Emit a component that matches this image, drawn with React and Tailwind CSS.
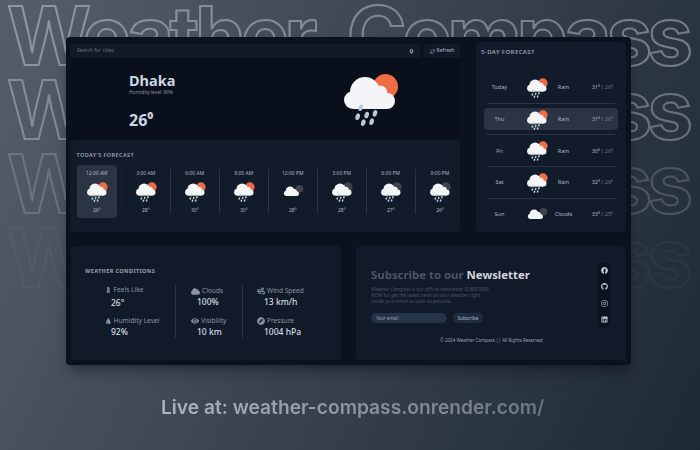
import { FaCloud, FaCompass, FaEye, FaFacebook, FaGithub, FaInstagram, FaLinkedin, FaMapMarkerAlt, FaThermometerFull, FaTint, FaWind } from 'react-icons/fa';
import { LuRefreshCw } from 'react-icons/lu';

const hours = [
  { time: '12:00 AM', temp: '26', kind: 'rain' },
  { time: '3:00 AM', temp: '28', kind: 'rain' },
  { time: '6:00 AM', temp: '30', kind: 'rain' },
  { time: '9:00 AM', temp: '30', kind: 'rain' },
  { time: '12:00 PM', temp: '28', kind: 'clouds' },
  { time: '3:00 PM', temp: '28', kind: 'night' },
  { time: '6:00 PM', temp: '27', kind: 'night' },
  { time: '9:00 PM', temp: '26', kind: 'night' },
];

const days = [
  { day: 'Today', kind: 'rain', label: 'Rain', high: '31⁰', low: '26⁰' },
  { day: 'Thu', kind: 'rain', label: 'Rain', high: '31⁰', low: '26⁰', active: true },
  { day: 'Fri', kind: 'rain', label: 'Rain', high: '30⁰', low: '26⁰' },
  { day: 'Sat', kind: 'rain', label: 'Rain', high: '32⁰', low: '26⁰' },
  { day: 'Sun', kind: 'clouds', label: 'Clouds', high: '33⁰', low: '25⁰' },
];

const drops = [
  [40.7, 47.7],
  [37.7, 56.7],
  [46.7, 55],
  [55, 53.3],
  [43.3, 62.7],
  [51.7, 61.7],
];

// Cloud with sun or moon behind it, drawn on a 100x75 box
const WeatherIcon = ({ kind, className }) => {
  const isRain = kind !== 'clouds';
  const orbColor = kind === 'rain' ? '#ee6c45' : '#3f444c';
  return (
    <svg viewBox="0 0 100 75" className={className}>
      {isRain ? <circle cx="65.5" cy="26.5" r="12.5" fill={orbColor} /> : <circle cx="67" cy="31" r="10" fill={orbColor} />}
      <g fill="#f3f5f7" transform={isRain ? undefined : 'translate(7.3 11.8) scale(0.78)'}>
        <circle cx="45" cy="32" r="15" />
        <circle cx="33" cy="40" r="9" />
        <circle cx="60" cy="33" r="7.5" />
        <circle cx="67" cy="41" r="8" />
        <rect x="33" y="36" width="34" height="13" />
      </g>
      {isRain &&
        drops.map(([x, y]) => (
          <ellipse key={`${x}-${y}`} cx={x} cy={y} rx="2.2" ry="3.4" fill="#b9c9da" transform={`rotate(15 ${x} ${y})`} />
        ))}
    </svg>
  );
};

const Condition = ({ icon, label, value, indent }) => (
  <div className="flex flex-col">
    <div className="flex h-[10px] items-center gap-[2px] whitespace-nowrap text-[6.6px] text-[#8a94a3]">
      {icon}
      <span>{label}</span>
    </div>
    <p className={`${indent} text-[8.5px] leading-[12px] font-medium text-[#d5dbe3]`}>{value}</p>
  </div>
);

const App = () => {
  return (
    <div className="relative h-[450px] w-[700px] overflow-hidden bg-[linear-gradient(115deg,#555e6b,#1e2936)] font-['Noto_Sans',sans-serif]">
      {/* Outlined title repeated behind the panel */}
      <div className="absolute top-[-1px] left-[7px] flex flex-col whitespace-nowrap font-['Inter',sans-serif] text-[81px] leading-[74px] font-bold tracking-[-4.5px] text-transparent [word-spacing:19px] [-webkit-text-stroke:2px_#ffffff]">
        <p className="opacity-35">Weather Compass</p>
        <p className="opacity-30">Weather Compass</p>
        <p className="opacity-[0.17]">Weather Compass</p>
        <p className="opacity-[0.03]">Weather Compass</p>
      </div>

      <div className="relative ml-[66px] mt-[37px] flex h-[328px] w-[565px] flex-col rounded-[4px] bg-[#0a121e] shadow-lg shadow-black/30">
        <div className="flex gap-[16px] pl-[4px] pt-[5px]">
          <div className="flex w-[390px] flex-col pt-[2px]">
            {/* Search */}
            <div className="flex h-[14px] gap-[4px]">
              <div className="flex flex-1 items-center justify-between rounded-[2px] bg-[#101a27] pl-[7px] pr-[6px] text-[5px] text-[#667080]">
                <span>Search for cities</span>
                <FaMapMarkerAlt className="text-[5px] text-[#8a94a3]" />
              </div>
              <div className="flex w-[36px] items-center justify-center gap-[2px] rounded-[2px] bg-[#101a27] text-[5px] text-[#aeb6c2]">
                <LuRefreshCw className="text-[5px]" />
                <span>Refresh</span>
              </div>
            </div>

            {/* Current weather */}
            <div className="flex h-[82px] justify-between bg-[#090f1b] pl-[59px] pr-[40px]">
              <div className="flex flex-col">
                <h1 className="mt-[12px] text-[14.5px] leading-[20px] font-bold text-[#cbd5e1]">Dhaka</h1>
                <p className="-mt-[1px] text-[4.8px] leading-[6px] text-[#8a94a3]">Humidity level: 90%</p>
                <p className="mt-[13px] text-[16px] leading-[24px] font-bold text-[#cbd5e1]">26⁰</p>
              </div>
              <WeatherIcon kind="rain" className="mt-[2px] h-[75px] w-[100px]" />
            </div>

            {/* Hourly forecast */}
            <div className="h-[92px] overflow-hidden rounded-[4px] bg-[#111b29] pl-[2.5px]">
              <h2 className="pl-[4px] pt-[11px] text-[5.5px] leading-[8px] font-semibold tracking-[0.4px] text-[#9ca3af]">TODAY'S FORECAST</h2>
              <div className="mt-[6px] flex">
                {hours.map((hour, i) => (
                  <div key={hour.time} className="flex h-[53px] w-[49px] shrink-0 items-center justify-center">
                    <div className={`flex h-[53px] w-[40px] flex-col items-center rounded-[4px] pt-[5px] ${i === 0 ? 'bg-[#2a3442]' : ''}`}>
                      <span className="text-[5px] leading-[7px] text-[#aeb6c2]">{hour.time}</span>
                      <WeatherIcon kind={hour.kind} className="h-[28.5px] w-[38px]" />
                      <span className="mt-[1px] text-[5px] leading-[7px] text-[#aeb6c2]">{hour.temp}⁰</span>
                    </div>
                    {i < 7 && <div className={`-mr-[4.5px] ml-[4px] h-[45px] w-px shrink-0 ${i === 0 ? 'bg-[#18222f]' : 'bg-[#2a3542]'}`} />}
                  </div>
                ))}
              </div>
            </div>
          </div>

          {/* 5-day forecast */}
          <div className="h-[190px] w-[150px] rounded-[4px] bg-[#111b29] px-[11px]">
            <h2 className="-ml-[6px] pt-[6px] text-[6px] leading-[8px] font-semibold tracking-[0.4px] text-[#9ca3af]">5-DAY FORECAST</h2>
            <div className="mt-[16px] flex flex-col">
              {days.map((row, i) => (
                <div key={row.day} className={`flex h-[31.7px] items-center ${i === 4 ? '' : 'border-b border-[#2a3542]'}`}>
                  <div className={`flex h-[22px] flex-1 items-center rounded-[4px] text-[5.5px] text-[#aeb6c2] ${row.active ? '-mx-[3px] bg-[#2a3442] px-[3px]' : ''}`}>
                    <span className="w-[25px] text-center">{row.day}</span>
                    <WeatherIcon kind={row.kind} className="-mr-[3px] ml-[5.5px] h-[28.5px] w-[38px]" />
                    <span className="w-[22px] text-center">{row.label}</span>
                    <span className="flex-1 pr-[2px] text-right text-[#6f7987]">
                      <span className="text-[#aeb6c2]">{row.high}</span> / {row.low}
                    </span>
                  </div>
                </div>
              ))}
            </div>
          </div>
        </div>

        <div className="mt-[14px] flex gap-[15px] pl-[5px]">
          {/* Conditions */}
          <div className="h-[114px] w-[270px] rounded-[4px] bg-[#111a28] pl-[14px]">
            <h2 className="pt-[21px] text-[5.5px] leading-[8px] font-bold tracking-[0.4px] text-[#9ca3af]">WEATHER CONDITIONS</h2>
            <div className="mt-[10px] flex h-[53px]">
              <div className="flex w-[91px] flex-col justify-between border-r border-[#2a3542] pl-[20px]">
                <Condition icon={<FaThermometerFull />} label="Feels Like" value="26°" indent="ml-[6px] mt-[2px]" />
                <Condition icon={<FaTint />} label="Humidity Level" value="92%" indent="ml-[6px]" />
              </div>
              <div className="flex w-[67px] flex-col justify-between border-r border-[#2a3542] pl-[15px] pt-px">
                <Condition icon={<FaCloud className="text-[9px]" />} label="Clouds" value="100%" indent="ml-[6px]" />
                <Condition icon={<FaEye className="text-[8px]" />} label="Visibility" value="10 km" indent="ml-[6px]" />
              </div>
              <div className="flex flex-col justify-between pl-[14px] pt-px">
                <Condition icon={<FaWind className="text-[8px]" />} label="Wind Speed" value="13 km/h" indent="ml-[7px]" />
                <Condition icon={<FaCompass className="text-[8px]" />} label="Pressure" value="1004 hPa" indent="ml-[7px]" />
              </div>
            </div>
          </div>

          {/* Newsletter */}
          <div className="flex h-[114px] w-[270px] rounded-[4px] bg-[#111a28] pl-[15px]">
            <div className="w-[227px]">
              <h2 className="pt-[20px] text-[11.4px] leading-[18px] font-bold text-[#4b5563]">
                Subscribe to our <span className="text-[#d1d5db]">Newsletter</span>
              </h2>
              <p className="mt-[2px] whitespace-nowrap text-[4.6px] leading-[6px] text-[#4b5563]">
                Weather Compass is our official newsletter. SUBSCRIBE
                <br />
                NOW for get the latest news on your weather right
                <br />
                inside your email as soon as possible.
              </p>
              <div className="mt-[9px] flex gap-[6px]">
                <div className="flex h-[10px] w-[76px] items-center rounded-full bg-[#243347] pl-[5px] text-[4.5px] text-[#9ca3af]">Your email</div>
                <div className="flex h-[10px] w-[30px] items-center justify-center rounded-full bg-[#1f2d42] text-[4.5px] text-[#aeb6c2]">Subscribe</div>
              </div>
              <p className="mt-[14px] pl-[69px] text-[4.5px] leading-[7px] text-[#9ca3af]">© 2024 Weather Compass || All Rights Reserved</p>
            </div>
            <div className="mt-[16px] flex h-[66px] w-[12px] flex-col items-center justify-around rounded-full bg-[#0a121e] text-[7px] text-[#c3cad4]">
              <FaFacebook />
              <FaGithub />
              <FaInstagram />
              <FaLinkedin />
            </div>
          </div>
        </div>
      </div>

      <p className="relative mt-[28px] ml-[161px] w-fit whitespace-nowrap bg-gradient-to-r from-[#aeb5c0] to-[#6b7683] bg-clip-text font-['Inter',sans-serif] text-[19.2px] leading-[28px] font-semibold text-transparent">
        Live at: weather-compass.onrender.com/
      </p>
    </div>
  );
};

export default App;
